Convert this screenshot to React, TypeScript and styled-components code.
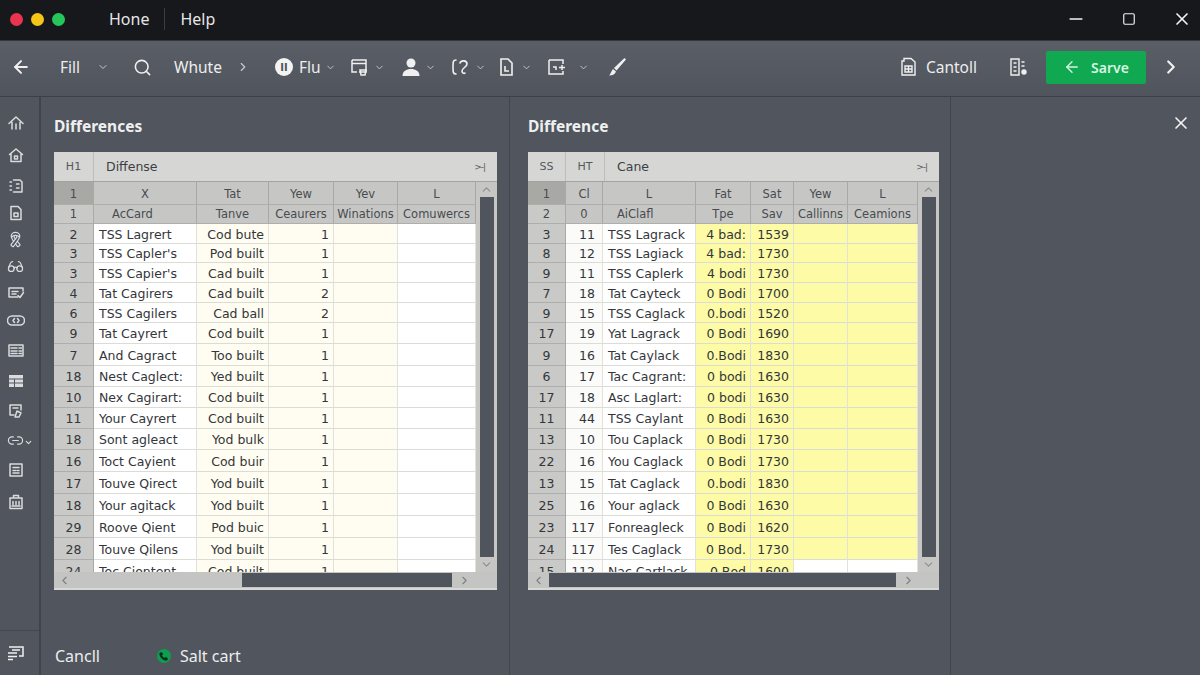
import React from "react";
import styled, { createGlobalStyle } from "styled-components";
import {
  ArrowLeft,
  ChevronDown,
  ChevronLeft,
  ChevronRight,
  ChevronUp,
  Glasses,
  Link2,
  Minus,
  Phone,
  Ribbon,
  Search,
  Square,
  X,
} from "lucide-react";

const GlobalStyle = createGlobalStyle`
  html, body {
    margin: 0;
    padding: 0;
    width: 1200px;
    height: 675px;
    overflow: hidden;
    background: #50555e;
    font-family: "DejaVu Sans", "Noto Sans", sans-serif;
  }
  * { box-sizing: border-box; }
  svg { flex: none; }
`;

const Page = styled.div`
  width: 1200px;
  height: 675px;
  display: flex;
  flex-direction: column;
  background: #50555e;
`;

const TitleBar = styled.header`
  height: 40px;
  flex: none;
  display: flex;
  align-items: center;
  background: #16181c;
  padding: 0 0 2px 10px;
`;

const Dot = styled.span<{ $color: string }>`
  width: 13px;
  height: 13px;
  border-radius: 50%;
  background: ${(p) => p.$color};
  margin-right: 8px;
`;

const MenuItem = styled.span`
  font-family: "Noto Sans", sans-serif;
  font-size: 16px;
  color: #e6e6e6;
`;

const MenuList = styled.nav`
  display: flex;
  align-items: center;
  margin-left: 36px;
  gap: 15px;
`;

const MenuDivider = styled.span`
  width: 1px;
  height: 22px;
  background: #3a3d42;
`;

const WindowControls = styled.div`
  margin-left: auto;
  display: flex;
  align-items: center;
  gap: 36px;
  padding-right: 8px;
  color: #f2f2f2;
`;

const ToolBar = styled.div`
  height: 57px;
  flex: none;
  display: flex;
  align-items: center;
  padding: 0 18px 3px 11px;
  background: linear-gradient(#5a5e66, #50545c);
  border-top: 1px solid #34373c;
  border-bottom: 1px solid #3d4047;
  color: #f0f0f0;
`;

const ToolGroup = styled.div<{ $ml: number; $gap?: number }>`
  display: flex;
  align-items: center;
  gap: ${(p) => p.$gap ?? 4}px;
  margin-left: ${(p) => p.$ml}px;
`;

const RightTools = styled.div`
  margin-left: auto;
  display: flex;
  align-items: center;
`;

const ToolText = styled.span`
  font-family: "Noto Sans", sans-serif;
  font-size: 15.5px;
  color: #eceded;
`;

const Chevron = styled(ChevronDown)`
  color: #c8cace;
`;

const RoundBadge = styled.span`
  width: 18px;
  height: 18px;
  border-radius: 50%;
  background: #f3f3f3;
  color: #50555e;
  margin-right: 2px;
  display: flex;
  align-items: center;
  justify-content: center;
  font-size: 10px;
  font-weight: 700;
`;

const SaveButton = styled.button`
  width: 100px;
  height: 33px;
  border: 0;
  border-radius: 2px;
  background: #10a850;
  color: #d8f5e2;
  display: flex;
  align-items: center;
  justify-content: center;
  gap: 10px;
  font-family: "Noto Sans", sans-serif;
  font-size: 14px;
  font-weight: 600;
`;

const Body = styled.main`
  flex: 1;
  display: flex;
  min-height: 0;
`;

const Rail = styled.aside`
  width: 41px;
  flex: none;
  display: flex;
  flex-direction: column;
  border-right: 2px solid #3f434a;
  color: #d9dbdd;
  padding-top: 17px;
`;

const RailItem = styled.div<{ $mt: number }>`
  position: relative;
  height: 18px;
  margin-top: ${(p) => p.$mt}px;
  padding-right: 8px;
  display: flex;
  align-items: center;
  justify-content: center;
`;

const RailCaret = styled(ChevronDown)`
  position: absolute;
  left: 24px;
  top: 7px;
`;

const RailFooter = styled.div`
  margin-top: auto;
  height: 45px;
  padding-right: 8px;
  border-top: 1px solid #43474e;
  display: flex;
  align-items: center;
  justify-content: center;
  color: #f0f0f0;
`;

const Panel = styled.section<{ $width: number; $pad: number }>`
  width: ${(p) => p.$width}px;
  flex: none;
  display: flex;
  flex-direction: column;
  padding: 20px 0 0 ${(p) => p.$pad}px;
  border-right: 1px solid #41454c;
`;

const Heading = styled.h2`
  margin: 0 0 16px;
  height: 19px;
  line-height: 19px;
  font-family: "Noto Sans", sans-serif;
  font-size: 15.5px;
  font-weight: 700;
  color: #eef0f0;
`;

const SidePanel = styled.aside`
  flex: 1;
  display: flex;
  justify-content: flex-end;
  padding: 16px 9px 0 0;
  color: #f2f2f2;
`;

const Sheet = styled.div<{ $width: number }>`
  width: ${(p) => p.$width}px;
  height: 438px;
  flex: none;
  display: flex;
  flex-direction: column;
  background: #c4c5c3;
  color: #33363a;
  font-size: 12.5px;
`;

const SheetTitle = styled.div`
  height: 30px;
  flex: none;
  display: flex;
  align-items: center;
  background: #d6d7d5;
  border-bottom: 1px solid #a3a4a2;
`;

const TitleCell = styled.span<{ $width?: number; $center?: boolean }>`
  height: 100%;
  display: flex;
  align-items: center;
  justify-content: ${(p) => (p.$center ? "center" : "flex-start")};
  width: ${(p) => (p.$width ? `${p.$width}px` : "auto")};
  padding-left: ${(p) => (p.$center ? 0 : 12)}px;
  border-right: ${(p) => (p.$center ? "1px solid #bdbebc" : "none")};
  color: ${(p) => (p.$center ? "#55585b" : "#3c3f43")};
  font-size: ${(p) => (p.$center ? 11 : 12.5)}px;
`;

const TitleEnd = styled.span`
  margin-left: auto;
  padding-right: 12px;
  font-size: 9px;
  color: #55585b;
  letter-spacing: -1px;
`;

const SheetMiddle = styled.div`
  flex: 1;
  min-height: 0;
  display: flex;
`;

const GridArea = styled.div`
  flex: 1;
  min-width: 0;
  overflow: hidden;
  background: #fff;
`;

const Row = styled.div<{ $cols: string; $height: number }>`
  display: grid;
  grid-template-columns: ${(p) => p.$cols};
  height: ${(p) => p.$height}px;
`;

const Cell = styled.div<{
  $bg?: string;
  $align?: "left" | "center" | "right";
  $head?: boolean;
  $pr?: number;
  $top?: number;
}>`
  background: ${(p) => p.$bg ?? "#fff"};
  line-height: 19px;
  padding: ${(p) => p.$top ?? 1}px ${(p) => p.$pr ?? 4}px 0 ${(p) => (p.$align === "center" ? 0 : 5)}px;
  white-space: nowrap;
  overflow: hidden;
  border-right: 1px solid ${(p) => (p.$head ? "#a9aaa8" : "#e2e2da")};
  border-bottom: 1px solid ${(p) => (p.$head ? "#aeafad" : "#dcdcd6")};
  display: flex;
  align-items: center;
  justify-content: ${(p) =>
    p.$align === "right" ? "flex-end" : p.$align === "center" ? "center" : "flex-start"};
`;

const HeadCell = styled(Cell).attrs({ $head: true })<{ $indent?: number }>`
  font-size: 11.5px;
  color: #484b4f;
  justify-content: ${(p) => (p.$indent ? "flex-start" : "center")};
  padding-left: ${(p) => p.$indent ?? 0}px;
  padding-right: 0;
`;

const VScroll = styled.div`
  width: 21px;
  flex: none;
  display: flex;
  flex-direction: column;
  align-items: center;
  color: #8b8d8e;
  background: #c6c7c5;
`;

const VThumb = styled.div`
  width: 14px;
  flex: 1;
  background: #50545c;
`;

const ScrollArrow = styled.div`
  height: 15px;
  display: flex;
  align-items: center;
  justify-content: center;
  flex: none;
`;

const HScroll = styled.div`
  height: 18px;
  flex: none;
  display: flex;
  align-items: center;
  color: #7d8082;
  background: #c4c5c3;
  border-bottom: 2px solid #d8d9d7;
`;

const HLeftArrow = styled(ChevronLeft)`
  margin-left: 4px;
`;

const HThumb = styled.div<{ $start: number; $width: number }>`
  height: 14px;
  width: ${(p) => p.$width}px;
  margin-left: ${(p) => p.$start}px;
  margin-right: 6px;
  background: #50545c;
`;

const Footer = styled.footer`
  margin-top: auto;
  height: 30px;
  padding-left: 1px;
  display: flex;
  align-items: flex-start;
  font-family: "Noto Sans", sans-serif;
  font-size: 16px;
  color: #eceded;
`;

const FooterAction = styled.span`
  display: flex;
  align-items: center;
  gap: 9px;
  margin-left: 57px;
`;

const GreenDot = styled.span`
  width: 14px;
  height: 14px;
  border-radius: 50%;
  background: #0f9d50;
  color: #0b2f1c;
  display: flex;
  align-items: center;
  justify-content: center;
`;

type IconProps = { size?: number };

const Line = ({ size = 18, children }: IconProps & { children: React.ReactNode }) => (
  <svg
    width={size}
    height={size}
    viewBox="0 0 18 18"
    fill="none"
    stroke="currentColor"
    strokeWidth={1.5}
    strokeLinecap="round"
    strokeLinejoin="round"
  >
    {children}
  </svg>
);

const RoofIcon = () => (
  <Line>
    <path d="M2 9.500 9 3l7 6.500M5 8.500V15M13 8.500V15M9 15v-5" />
  </Line>
);
const HouseIcon = () => (
  <Line>
    <path d="M2.500 8.500 9 3l6.500 5.500M4 7.500V15.500h10V7.500" />
    <path d="M7.500 13v-3h3v3z" />
  </Line>
);
const ListDocIcon = () => (
  <Line>
    <path d="M6.500 3h6.500l2 2v10h-8.500" />
    <path d="M3 5h1.500M3 9h1.500M3 13h1.500M9.500 7h2.500M9.500 11h2.500" />
  </Line>
);
const DocIcon = () => (
  <Line>
    <path d="M4 2.500h7l3 3v10H4z" />
    <path d="M7 9h4v3.500H7z" />
  </Line>
);
const MailCheckIcon = () => (
  <Line>
    <path d="M2 4h14v3M2 4v9h9" />
    <path d="M5 7.500h6M5 10h4M11 11.500l2 2 3.500-5" />
  </Line>
);
const CodeCloudIcon = () => (
  <Line>
    <path d="M5 5h8a4.500 4.500 0 0 1 0 9H5A4.500 4.500 0 0 1 5 5z" />
    <path d="M7.500 7.500 6 9.500l1.500 2M10.500 7.500l1.500 2-1.500 2" />
  </Line>
);
const PanelLinesIcon = () => (
  <Line>
    <path d="M2 4h14v11H2z" />
    <path d="M4 7h6M4 10h6M4 12.500h6M12 7h2.500M12 10h2.500M12 12.500h2.500" />
  </Line>
);
const SolidTableIcon = () => (
  <svg width="18" height="18" viewBox="0 0 18 18" fill="currentColor">
    <path d="M2 3h14v3.500H2zM2 7.500h5v3H2zM8 7.500h8v3H8zM2 11.500h5V15H2zM8 11.500h8V15H8z" />
  </svg>
);
const TagDocIcon = () => (
  <Line>
    <path d="M3 3h11v5M3 3v10h4" />
    <path d="M6 6h5M8 15l2-6 4 2-2 4z" />
  </Line>
);
const ScreenIcon = () => (
  <Line>
    <path d="M3 3h12v12H3z" />
    <path d="M6 6.500h6M6 9.500h2.500M10 9.500h2M6 12h6" />
  </Line>
);
const ClipIcon = () => (
  <Line>
    <path d="M3 5h12v10.500H3zM6.500 5V2.500h5V5" />
    <path d="M6 8.500v3M9 8.500v3M12 8.500v3M5 13h8" />
  </Line>
);
const NotesIcon = () => (
  <svg width="18" height="18" viewBox="0 0 18 18" fill="none" stroke="currentColor" strokeWidth={1.5}>
    <path d="M2 3h14v9h-4" />
    <path d="M5 6h8M1 9h9M1 12.500h9M1 15.500h5" />
  </svg>
);

const CardIcon = () => (
  <svg width="20" height="20" viewBox="0 0 20 20" fill="none" stroke="currentColor" strokeWidth={1.5}>
    <path d="M2 3h14v12H9M2 3v12h5M2 6.500h14" />
    <path d="M10 13h6l-1 5h-4z" />
  </svg>
);
const ChainIcon = () => (
  <svg width="20" height="20" viewBox="0 0 20 20" fill="none" stroke="currentColor" strokeWidth={1.6} strokeLinecap="round">
    <path d="M5 3C2 3 2 5 2 10s0 7 3 7" />
    <path d="M9 6c1-3 7-3 7 1 0 3-5 4-5 7 0 2 2 3 3 2" />
  </svg>
);
const PageIcon = () => (
  <svg width="20" height="20" viewBox="0 0 20 20" fill="none" stroke="currentColor" strokeWidth={1.6}>
    <path d="M4 2h7l4 4v12H4z" />
    <path d="M8 9v5h4" />
  </svg>
);
const FrameIcon = () => (
  <svg width="20" height="20" viewBox="0 0 20 20" fill="none" stroke="currentColor" strokeWidth={1.5}>
    <path d="M2 3h14v4M2 3v14h14v-3" />
    <path d="M6 10h3v3M12 10.500h6M15 8v5" />
  </svg>
);
const PersonIcon = () => (
  <svg width="20" height="20" viewBox="0 0 20 20" fill="#f0f0f0">
    <circle cx="10" cy="6" r="4.500" />
    <path d="M1.500 19c0-5 4-7 8.500-7s8.500 2 8.500 7z" />
  </svg>
);
const PenIcon = () => (
  <svg width="20" height="20" viewBox="0 0 20 20" fill="#f0f0f0">
    <path d="M17.500 1 19 2.500 9.500 13.500 7 11z" />
    <path d="M6 12l3 2.500c-1 3-4 4-7 4 1.500-1 2-4 4-6.500z" />
  </svg>
);
const ReportIcon = () => (
  <svg width="20" height="20" viewBox="0 0 20 20" fill="none" stroke="currentColor" strokeWidth={1.4}>
    <path d="M3 4h2V1.500h7L16 5v13H3z" />
    <path d="M6 9h7v6H6zM6 12h7M9.500 9v6" />
  </svg>
);
const ReportListIcon = () => (
  <svg width="20" height="20" viewBox="0 0 20 20" fill="none" stroke="currentColor" strokeWidth={1.4}>
    <path d="M3 2h8v16H3zM5.500 6h3M5.500 10h3M5.500 14h3" />
    <path d="M13.500 5h3M13.500 9h3" />
    <circle cx="16" cy="15" r="2" fill="currentColor" />
  </svg>
);

const railIcons = [
  { icon: <RoofIcon />, mt: 0 },
  { icon: <HouseIcon />, mt: 14 },
  { icon: <ListDocIcon />, mt: 13 },
  { icon: <DocIcon />, mt: 9 },
  { icon: <Ribbon size={17} strokeWidth={1.7} />, mt: 8 },
  { icon: <Glasses size={17} strokeWidth={1.7} />, mt: 9 },
  { icon: <MailCheckIcon />, mt: 9 },
  { icon: <CodeCloudIcon />, mt: 9 },
  { icon: <PanelLinesIcon />, mt: 12 },
  { icon: <SolidTableIcon />, mt: 13 },
  { icon: <TagDocIcon />, mt: 12 },
  { icon: <Link2 size={17} strokeWidth={1.7} />, mt: 11, caret: true },
  { icon: <ScreenIcon />, mt: 12 },
  { icon: <ClipIcon />, mt: 14 },
];

const rowHeights = [20, 19, 20, 20, 20, 21, 22, 21, 21, 21, 21, 22, 22, 22, 22, 22, 22];

const leftRows = [
  ["2", "TSS Lagrert", "Cod bute", "1"],
  ["3", "TSS Capler's", "Pod built", "1"],
  ["3", "TSS Capier's", "Cad built", "1"],
  ["4", "Tat Cagirers", "Cad built", "2"],
  ["6", "TSS Cagilers", "Cad ball", "2"],
  ["9", "Tat Cayrert", "Cod built", "1"],
  ["7", "And Cagract", "Too built", "1"],
  ["18", "Nest Caglect:", "Yed built", "1"],
  ["10", "Nex Cagirart:", "Cod built", "1"],
  ["11", "Your Cayrert", "Cod built", "1"],
  ["18", "Sont agleact", "Yod bulk", "1"],
  ["16", "Toct Cayient", "Cod buir", "1"],
  ["17", "Touve Qirect", "Yod built", "1"],
  ["18", "Your agitack", "Yod built", "1"],
  ["29", "Roove Qient", "Pod buic", "1"],
  ["28", "Touve Qilens", "Yod built", "1"],
  ["24", "Toc Ciontent", "Cod built", "1"],
];

const rightRows = [
  ["3", "11", "TSS Lagrack", "4 bad:", "1539"],
  ["8", "12", "TSS Lagiack", "4 bad:", "1730"],
  ["9", "11", "TSS Caplerk", "4 bodi", "1730"],
  ["7", "18", "Tat Cayteck", "0 Bodi", "1700"],
  ["9", "15", "TSS Caglack", "0.bodi", "1520"],
  ["17", "19", "Yat Lagrack", "0 Bodi", "1690"],
  ["9", "16", "Tat Caylack", "0.Bodi", "1830"],
  ["6", "17", "Tac Cagrant:", "0 bodi", "1630"],
  ["17", "18", "Asc Laglart:", "0 bodi", "1630"],
  ["11", "44", "TSS Caylant", "0 Bodi", "1630"],
  ["13", "10", "Tou Caplack", "0 Bodi", "1730"],
  ["22", "16", "You Caglack", "0 Bodi", "1730"],
  ["13", "15", "Tat Caglack", "0.bodi", "1830"],
  ["25", "16", "Your aglack", "0 Bodi", "1630"],
  ["23", "117", "Fonreagleck", "0 Bodi", "1620"],
  ["24", "117", "Tes Caglack", "0 Bod.", "1730"],
  ["15", "112", "Nac Cartlack", "0 Bod", "1600"],
];

const HEAD = "#c6c7c5";
const CORNER = "#a8a9a5";
const ROWHEAD = "#c9cac8";
const CREAM = "#fffdf1";
const YELLOW = "#fdfba6";

const leftCols = "40px 103px 72px 65px 64px 78px";
const rightCols = "38px 37px 93px 55px 43px 54px 70px";

const Scrollbars = ({ children, start, width }: { children: React.ReactNode; start: number; width: number }) => (
  <>
    <SheetMiddle>
      <GridArea>{children}</GridArea>
      <VScroll>
        <ScrollArrow>
          <ChevronUp size={13} />
        </ScrollArrow>
        <VThumb />
        <ScrollArrow>
          <ChevronDown size={13} />
        </ScrollArrow>
      </VScroll>
    </SheetMiddle>
    <HScroll>
      <HLeftArrow size={13} />
      <HThumb $start={start} $width={width} />
      <ChevronRight size={13} />
    </HScroll>
  </>
);

const App = () => {
  return (
    <Page>
      <GlobalStyle />
      <TitleBar>
        <Dot $color="#e8344e" />
        <Dot $color="#f5c518" />
        <Dot $color="#27c65a" />
        <MenuList>
          <MenuItem>Hone</MenuItem>
          <MenuDivider />
          <MenuItem>Help</MenuItem>
        </MenuList>
        <WindowControls>
          <Minus size={20} />
          <Square size={14} strokeWidth={2} />
          <X size={20} />
        </WindowControls>
      </TitleBar>

      <ToolBar>
        <ArrowLeft size={20} strokeWidth={2.4} />
        <ToolGroup $ml={29}>
          <ToolText>Fill</ToolText>
        </ToolGroup>
        <ToolGroup $ml={17}>
          <Chevron size={12} />
        </ToolGroup>
        <ToolGroup $ml={24}>
          <Search size={19} />
        </ToolGroup>
        <ToolGroup $ml={22}>
          <ToolText>Whute</ToolText>
        </ToolGroup>
        <ToolGroup $ml={14}>
          <ChevronRight size={14} color="#c8cace" />
        </ToolGroup>
        <ToolGroup $ml={25}>
          <RoundBadge>II</RoundBadge>
          <ToolText>Flu</ToolText>
          <Chevron size={11} />
        </ToolGroup>
        <ToolGroup $ml={14}>
          <CardIcon />
          <Chevron size={11} />
        </ToolGroup>
        <ToolGroup $ml={16}>
          <PersonIcon />
          <Chevron size={11} />
        </ToolGroup>
        <ToolGroup $ml={15}>
          <ChainIcon />
          <Chevron size={11} />
        </ToolGroup>
        <ToolGroup $ml={11}>
          <PageIcon />
          <Chevron size={11} />
        </ToolGroup>
        <ToolGroup $ml={15} $gap={11}>
          <FrameIcon />
          <Chevron size={11} />
        </ToolGroup>
        <ToolGroup $ml={18}>
          <PenIcon />
        </ToolGroup>

        <RightTools>
          <ToolGroup $ml={0} $gap={7}>
            <ReportIcon />
            <ToolText>Cantoll</ToolText>
          </ToolGroup>
          <ToolGroup $ml={31}>
            <ReportListIcon />
          </ToolGroup>
          <ToolGroup $ml={18}>
            <SaveButton>
              <ArrowLeft size={18} strokeWidth={1.8} />
              Sarve
            </SaveButton>
          </ToolGroup>
          <ToolGroup $ml={14}>
            <ChevronRight size={22} strokeWidth={2.4} />
          </ToolGroup>
        </RightTools>
      </ToolBar>

      <Body>
        <Rail>
          {railIcons.map((item, i) => (
            <RailItem key={i} $mt={item.mt}>
              {item.icon}
              {item.caret && <RailCaret size={9} strokeWidth={3} />}
            </RailItem>
          ))}
          <RailFooter>
            <NotesIcon />
          </RailFooter>
        </Rail>

        <Panel $width={469} $pad={13}>
          <Heading>Differences</Heading>
          <Sheet $width={443}>
            <SheetTitle>
              <TitleCell $width={40} $center>
                H1
              </TitleCell>
              <TitleCell>Diffense</TitleCell>
              <TitleEnd>&gt;-|</TitleEnd>
            </SheetTitle>
            <Scrollbars start={171} width={210}>
              <Row $cols={leftCols} $height={23}>
                <HeadCell $bg={CORNER} $top={2}>1</HeadCell>
                <HeadCell $bg={HEAD} $top={2}>X</HeadCell>
                <HeadCell $bg={HEAD} $top={2}>Tat</HeadCell>
                <HeadCell $bg={HEAD} $top={2}>Yew</HeadCell>
                <HeadCell $bg={HEAD} $top={2}>Yev</HeadCell>
                <HeadCell $bg={HEAD} $top={2}>L</HeadCell>
              </Row>
              <Row $cols={leftCols} $height={19}>
                <HeadCell $bg={ROWHEAD}>1</HeadCell>
                <HeadCell $bg={HEAD} $indent={18}>AcCard</HeadCell>
                <HeadCell $bg={HEAD}>Tanve</HeadCell>
                <HeadCell $bg={HEAD}>Ceaurers</HeadCell>
                <HeadCell $bg={HEAD}>Winations</HeadCell>
                <HeadCell $bg={HEAD}>Comuwercs</HeadCell>
              </Row>
              {leftRows.map((r, i) => (
                <Row key={i} $cols={leftCols} $height={rowHeights[i]}>
                  <Cell $bg={ROWHEAD} $align="center" $head $pr={0}>{r[0]}</Cell>
                  <Cell>{r[1]}</Cell>
                  <Cell $bg={CREAM} $align="right">{r[2]}</Cell>
                  <Cell $bg={CREAM} $align="right">{r[3]}</Cell>
                  <Cell $bg={CREAM} />
                  <Cell />
                </Row>
              ))}
            </Scrollbars>
          </Sheet>
          <Footer>
            Cancll
            <FooterAction>
              <GreenDot>
                <Phone size={9} fill="currentColor" />
              </GreenDot>
              Salt cart
            </FooterAction>
          </Footer>
        </Panel>

        <Panel $width={441} $pad={18}>
          <Heading>Difference</Heading>
          <Sheet $width={411}>
            <SheetTitle>
              <TitleCell $width={38} $center>
                SS
              </TitleCell>
              <TitleCell $width={39} $center>
                HT
              </TitleCell>
              <TitleCell>Cane</TitleCell>
              <TitleEnd>&gt;-|</TitleEnd>
            </SheetTitle>
            <Scrollbars start={4} width={347}>
              <Row $cols={rightCols} $height={23}>
                <HeadCell $bg={CORNER} $top={2}>1</HeadCell>
                <HeadCell $bg={HEAD} $top={2}>Cl</HeadCell>
                <HeadCell $bg={HEAD} $top={2}>L</HeadCell>
                <HeadCell $bg={HEAD} $top={2}>Fat</HeadCell>
                <HeadCell $bg={HEAD} $top={2}>Sat</HeadCell>
                <HeadCell $bg={HEAD} $top={2}>Yew</HeadCell>
                <HeadCell $bg={HEAD} $top={2}>L</HeadCell>
              </Row>
              <Row $cols={rightCols} $height={19}>
                <HeadCell $bg={ROWHEAD}>2</HeadCell>
                <HeadCell $bg={HEAD}>0</HeadCell>
                <HeadCell $bg={HEAD} $indent={14}>AiClafl</HeadCell>
                <HeadCell $bg={HEAD}>Tpe</HeadCell>
                <HeadCell $bg={HEAD}>Sav</HeadCell>
                <HeadCell $bg={HEAD}>Callinns</HeadCell>
                <HeadCell $bg={HEAD}>Ceamions</HeadCell>
              </Row>
              {rightRows.map((r, i) => {
                const last = i === rightRows.length - 1;
                return (
                  <Row key={i} $cols={rightCols} $height={rowHeights[i]}>
                    <Cell $bg={ROWHEAD} $align="center" $head $pr={0}>{r[0]}</Cell>
                    <Cell $bg="#fbfbfa" $align="right" $pr={7}>{r[1]}</Cell>
                    <Cell>{r[2]}</Cell>
                    <Cell $bg={YELLOW} $align="right">{r[3]}</Cell>
                    <Cell $bg={YELLOW} $align="right">{r[4]}</Cell>
                    <Cell $bg={last ? "#fff" : YELLOW} />
                    <Cell $bg={last ? "#fff" : YELLOW} />
                  </Row>
                );
              })}
            </Scrollbars>
          </Sheet>
        </Panel>

        <SidePanel>
          <X size={20} />
        </SidePanel>
      </Body>
    </Page>
  );
};

export default App;
